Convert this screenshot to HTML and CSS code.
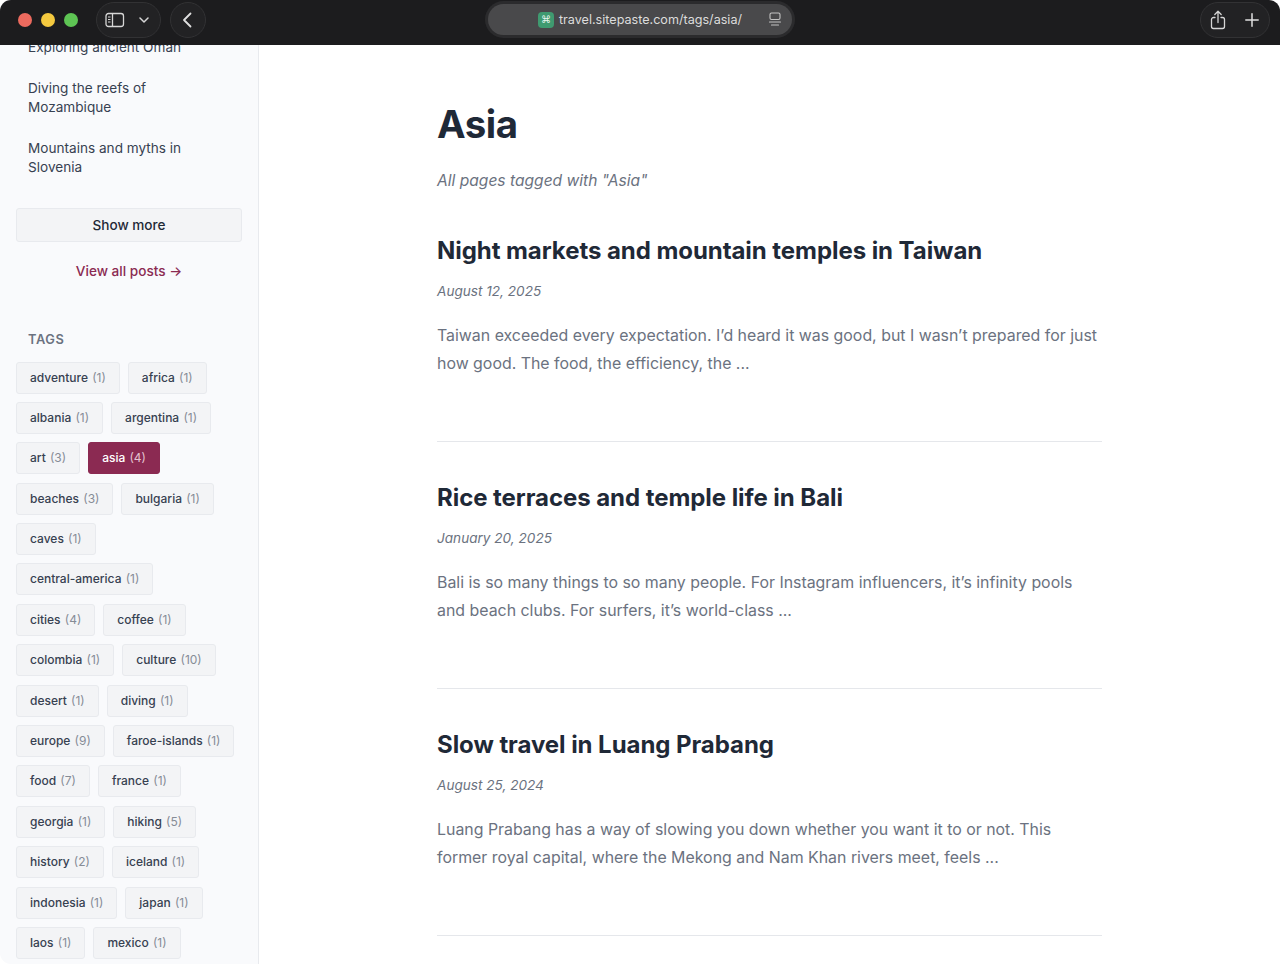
FILE: index.html
```html
<!DOCTYPE html>
<html lang="en">
<head>
<meta charset="utf-8">
<title>Asia</title>
<link rel="stylesheet" href="styles.css">
</head>
<body>
<div class="window">
  <header class="toolbar">
    <div class="tb-left">
      <div class="lights"><span class="light red"></span><span class="light yellow"></span><span class="light green"></span></div>
      <div class="pill side-pill">
        <svg width="20" height="16" viewBox="0 0 20 16" fill="none" stroke="#d6d6d6" stroke-width="1.3"><rect x="1" y="1.5" width="17.5" height="13" rx="2.5"/><path d="M7.5 1.5v13"/><path d="M3 5h2.5M3 7.5h2.5M3 10h2.5" stroke-width="1"/></svg>
        <svg width="10" height="6" viewBox="0 0 10 6" fill="none" stroke="#d6d6d6" stroke-width="1.5" stroke-linecap="round" stroke-linejoin="round"><path d="M1 1l4 4 4-4"/></svg>
      </div>
      <div class="pill back-pill">
        <svg width="10" height="16" viewBox="0 0 10 16" fill="none" stroke="#e0e0e0" stroke-width="1.8" stroke-linecap="round" stroke-linejoin="round"><path d="M8.5 1.5L2 8l6.5 6.5"/></svg>
      </div>
    </div>
    <div class="address">
      <span class="favicon">⌘</span>
      <span class="url">travel.sitepaste.com/tags/asia/</span>
      <svg class="reader" width="14" height="14" viewBox="0 0 14 14" fill="none" stroke="#c4c4c4" stroke-width="1.1" stroke-linecap="round"><rect x="2" y="1" width="10" height="6.5" rx="1.5"/><path d="M1.5 10h11M3.5 13h7"/></svg>
    </div>
    <div class="pill right-pill">
      <svg width="16" height="20" viewBox="0 0 16 20" fill="none" stroke="#d6d6d6" stroke-width="1.3" stroke-linecap="round" stroke-linejoin="round"><path d="M5 7.5H3.5a2 2 0 0 0-2 2v7a2 2 0 0 0 2 2h9a2 2 0 0 0 2-2v-7a2 2 0 0 0-2-2H11"/><path d="M8 12.5V1.5M4.8 4.5L8 1.3l3.2 3.2"/></svg>
      <svg width="14" height="14" viewBox="0 0 14 14" fill="none" stroke="#e0e0e0" stroke-width="1.5" stroke-linecap="round"><path d="M7 .8v12.4M.8 7h12.4"/></svg>
    </div>
  </header>
  <div class="page">
    <aside class="sidebar">
      <div class="sidebar-scroll">
        <ul class="post-list">
          <li>Exploring ancient Oman</li>
          <li>Diving the reefs of Mozambique</li>
          <li>Mountains and myths in Slovenia</li>
        </ul>
        <button class="show-more">Show more</button>
        <a class="view-all">View all posts →</a>
        <h3 class="tags-title">TAGS</h3>
        <div class="tags">
          <a class="tag">adventure <span>(1)</span></a>
          <a class="tag">africa <span>(1)</span></a>
          <a class="tag">albania <span>(1)</span></a>
          <a class="tag">argentina <span>(1)</span></a>
          <a class="tag">art <span>(3)</span></a>
          <a class="tag active">asia <span>(4)</span></a>
          <a class="tag">beaches <span>(3)</span></a>
          <a class="tag">bulgaria <span>(1)</span></a>
          <a class="tag">caves <span>(1)</span></a>
          <a class="tag">central-america <span>(1)</span></a>
          <a class="tag">cities <span>(4)</span></a>
          <a class="tag">coffee <span>(1)</span></a>
          <a class="tag">colombia <span>(1)</span></a>
          <a class="tag">culture <span>(10)</span></a>
          <a class="tag">desert <span>(1)</span></a>
          <a class="tag">diving <span>(1)</span></a>
          <a class="tag">europe <span>(9)</span></a>
          <a class="tag">faroe-islands <span>(1)</span></a>
          <a class="tag">food <span>(7)</span></a>
          <a class="tag">france <span>(1)</span></a>
          <a class="tag">georgia <span>(1)</span></a>
          <a class="tag">hiking <span>(5)</span></a>
          <a class="tag">history <span>(2)</span></a>
          <a class="tag">iceland <span>(1)</span></a>
          <a class="tag">indonesia <span>(1)</span></a>
          <a class="tag">japan <span>(1)</span></a>
          <a class="tag">laos <span>(1)</span></a>
          <a class="tag">mexico <span>(1)</span></a>
        </div>
      </div>
    </aside>
    <main class="main">
      <h1>Asia</h1>
      <p class="subtitle">All pages tagged with "Asia"</p>
      <article class="post">
        <h2>Night markets and mountain temples in Taiwan</h2>
        <p class="date">August 12, 2025</p>
        <p class="excerpt">Taiwan exceeded every expectation. I’d heard it was good, but I wasn’t prepared for just how good. The food, the efficiency, the ...</p>
      </article>
      <article class="post">
        <h2>Rice terraces and temple life in Bali</h2>
        <p class="date">January 20, 2025</p>
        <p class="excerpt">Bali is so many things to so many people. For Instagram influencers, it’s infinity pools and beach clubs. For surfers, it’s world-class ...</p>
      </article>
      <article class="post">
        <h2>Slow travel in Luang Prabang</h2>
        <p class="date">August 25, 2024</p>
        <p class="excerpt">Luang Prabang has a way of slowing you down whether you want it to or not. This former royal capital, where the Mekong and Nam Khan rivers meet, feels ...</p>
      </article>
    </main>
  </div>
</div>
</body>
</html>
```
FILE: styles.css
```css
* { box-sizing: border-box; }
html, body { margin: 0; padding: 0; height: 100%; background: #fff; overflow: hidden; }
body { font-family: Inter, "Noto Sans", sans-serif; color: #1f2937; }
.window { height: 964px; display: flex; flex-direction: column; overflow: hidden; border-radius: 11px; background: #fff; }
.toolbar { height: 45px; flex: none; background: #1c1c1e; display: flex; align-items: center; justify-content: space-between; padding: 0 10px 6px 18px; position: relative; z-index: 2; }
.tb-left { display: flex; align-items: center; }
.lights { display: flex; gap: 9px; margin-right: 18px; }
.light { width: 14px; height: 14px; border-radius: 50%; }
.red { background: #ec6a5e; }
.yellow { background: #f4c93f; }
.green { background: #5ec454; }
.pill { height: 36px; border-radius: 18px; border: 1px solid #323234; background: #222224; display: flex; align-items: center; }
.side-pill { width: 65px; padding: 0 11px 0 8px; justify-content: space-between; margin-right: 9px; }
.back-pill { width: 36px; justify-content: center; padding-right: 2px; }
.address { position: absolute; left: 488px; top: 4px; width: 304px; height: 31px; border-radius: 16px; background: #49494b; box-shadow: 0 0 0 3px #2b2b2d; display: flex; align-items: center; padding-left: 50px; }
.favicon { width: 16px; height: 16px; border-radius: 4px; background: #3f9a70; color: #e8f5ee; font-size: 10px; line-height: 16px; text-align: center; margin-right: 5px; font-family: "DejaVu Sans", sans-serif; }
.url { font-size: 12.6px; color: #dcdcdc; white-space: nowrap; }
.reader { position: absolute; right: 10px; top: 8px; }
.right-pill { width: 70px; padding: 0 10px 0 9px; justify-content: space-between; }
.page { flex: 1; display: flex; min-height: 0; }
.sidebar { width: 259px; flex: none; background: #f9fafc; border-right: 1px solid #e8eaee; overflow: hidden; }
.sidebar-scroll { margin-top: -7px; padding: 0 16px; }
.post-list { list-style: none; margin: 0; padding: 0 12px; font-size: 13.6px; line-height: 19px; color: #374151; display: flex; flex-direction: column; gap: 22px; }
.show-more { display: block; width: 100%; height: 34px; margin-top: 31px; background: #f3f4f6; border: 1px solid #e8eaee; border-radius: 3px; font: 500 13.6px Inter, sans-serif; color: #1f2937; }
.view-all { display: block; text-align: center; margin-top: 20px; font-size: 13.6px; line-height: 19px; font-weight: 500; color: #8b2a52; }
.tags-title { margin: 50px 0 0; padding-left: 12px; font-size: 12.8px; line-height: 18px; font-weight: 600; letter-spacing: .6px; color: #6b7280; }
.tags { display: flex; flex-wrap: wrap; gap: 8.4px 8px; margin-top: 12.5px; width: 220px; }
.tag { height: 32px; line-height: 30px; padding: 0 13px; background: #f3f4f6; border: 1px solid #e8eaee; border-radius: 3px; font-size: 12px; font-weight: 500; color: #374151; white-space: nowrap; }
.tag span { color: #868c96; font-weight: 400; margin-left: 1px; }
.tag.active { background: #8b2a52; border-color: #8b2a52; color: #fff; }
.tag.active span { color: #e3c3d0; }
.main { flex: 1; padding: 0 178px 0 178px; min-width: 0; }
h1 { margin: 53px 0 0; font-size: 38.4px; line-height: 52px; font-weight: 700; color: #1f2937; letter-spacing: -.5px; }
.subtitle { margin: 18px 0 0; font-size: 15.6px; line-height: 26px; font-style: italic; color: #6b7280; }
.post { padding: 0 0 63px; border-bottom: 1px solid #e5e7eb; margin-bottom: 39px; }
.subtitle + .post { margin-top: 40px; }
h2 { margin: 0; font-size: 24px; line-height: 33px; font-weight: 700; color: #1f2937; letter-spacing: -.06px; }
.date { margin: 15px 0 0; font-size: 13.6px; line-height: 19px; font-style: italic; color: #6b7280; }
.excerpt { margin: 21px 0 0; font-size: 15.9px; line-height: 28px; color: #6b7280; }
```
